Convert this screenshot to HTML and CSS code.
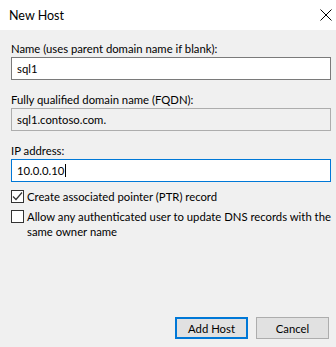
FILE: index.html
```html
<!DOCTYPE html>
<html>
<head>
<meta charset="utf-8">
<link rel="stylesheet" href="styles.css">
</head>
<body>
<div class="dialog">
  <div class="titlebar">
    <span class="title">New Host</span>
    <svg class="close" width="12" height="12" viewBox="0 0 12 12"><path d="M0.5 0.5 L11.5 11.5 M11.5 0.5 L0.5 11.5" stroke="#000" stroke-width="1" fill="none"/></svg>
  </div>
  <div class="content">
    <div class="field">
      <div class="label">Name (uses parent domain name if blank):</div>
      <div class="input">sql1</div>
    </div>
    <div class="field">
      <div class="label">Fully qualified domain name (FQDN):</div>
      <div class="input readonly">sql1.contoso.com.</div>
    </div>
    <div class="field last">
      <div class="label">IP address:</div>
      <div class="input focused">10.0.0.10<span class="caret"></span></div>
    </div>
    <div class="check">
      <span class="box"><svg width="11" height="11" viewBox="0 0 11 11"><path d="M1 5.5 L4 8.5 L10 1.5" stroke="#333" stroke-width="1.2" fill="none"/></svg></span>
      <span class="check-label">Create associated pointer (PTR) record</span>
    </div>
    <div class="check">
      <span class="box"></span>
      <span class="check-label">Allow any authenticated user to update DNS records with the same owner name</span>
    </div>
  </div>
  <div class="buttons">
    <div class="btn default">Add Host</div>
    <div class="btn">Cancel</div>
  </div>
</div>
</body>
</html>
```
FILE: styles.css
```css
* { box-sizing: border-box; }
html, body { margin: 0; padding: 0; }
body {
  width: 336px;
  height: 347px;
  background: #f0f0f0;
  font-family: "Lato", "Liberation Sans", sans-serif;
  font-size: 11.3px;
  color: #000;
  overflow: hidden;
}
.dialog {
  display: flex;
  flex-direction: column;
  height: 347px;
}
.titlebar {
  height: 30px;
  background: #fff;
  display: flex;
  align-items: center;
  justify-content: space-between;
  padding: 0 4px 0 9px;
}
.title { font-size: 12.5px; }
.close { display: block; margin-top: -1px; }
.content {
  padding: 11px 5px 0 11px;
  display: flex;
  flex-direction: column;
}
.field { margin-bottom: 12px; }
.field.last { margin-bottom: 7px; }
.label { line-height: 16px; height: 16px; }
.input {
  height: 23px;
  border: 1px solid #7a7a7a;
  background: #fff;
  padding: 0 5px;
  line-height: 21px;
  display: flex;
  align-items: center;
}
.input.readonly { background: #f0f0f0; border-color: #adadad; }
.input.focused { border-color: #0078d7; }
.caret {
  display: inline-block;
  width: 1px;
  height: 13px;
  background: #000;
  margin-left: 1px;
}
.check {
  display: flex;
  align-items: flex-start;
  margin-bottom: 5px;
}
.box {
  flex: none;
  width: 13px;
  height: 13px;
  border: 1px solid #333;
  background: #fff;
  margin-top: 1px;
  margin-right: 3px;
  display: flex;
  align-items: center;
  justify-content: center;
}
.box svg { display: block; }
.check-label { line-height: 15px; }
.buttons {
  margin-top: auto;
  display: flex;
  justify-content: flex-end;
  gap: 8px;
  padding: 0 7px 8px 0;
}
.btn {
  width: 73px;
  height: 22px;
  border: 1px solid #adadad;
  background: #e1e1e1;
  display: flex;
  align-items: center;
  justify-content: center;
}
.btn.default { border: 2px solid #0078d7; }
```
